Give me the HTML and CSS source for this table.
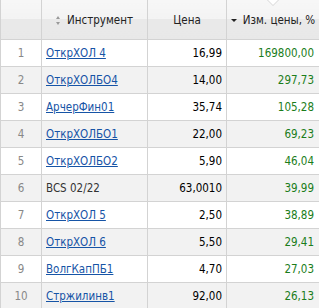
FILE: index.html
```html
<!DOCTYPE html>
<html lang="ru">
<head>
<meta charset="utf-8">
<link rel="stylesheet" href="styles.css">
</head>
<body>
<table class="grid">
  <colgroup>
    <col class="c-num"><col class="c-name"><col class="c-price"><col class="c-chg">
  </colgroup>
  <thead>
    <tr>
      <th></th>
      <th><span class="sort-both"></span>Инструмент</th>
      <th>Цена</th>
      <th class="sorted"><span class="sort-desc"></span>Изм. цены, %</th>
    </tr>
  </thead>
  <tbody>
    <tr><td class="num">1</td><td class="name"><a href="#">ОткрХОЛ 4</a></td><td class="price">16,99</td><td class="chg">169800,00</td></tr>
    <tr><td class="num">2</td><td class="name"><a href="#">ОткрХОЛБО4</a></td><td class="price">14,00</td><td class="chg">297,73</td></tr>
    <tr><td class="num">3</td><td class="name"><a href="#">АрчерФин01</a></td><td class="price">35,74</td><td class="chg">105,28</td></tr>
    <tr><td class="num">4</td><td class="name"><a href="#">ОткрХОЛБО1</a></td><td class="price">22,00</td><td class="chg">69,23</td></tr>
    <tr><td class="num">5</td><td class="name"><a href="#">ОткрХОЛБО2</a></td><td class="price">5,90</td><td class="chg">46,04</td></tr>
    <tr><td class="num">6</td><td class="name"><span class="plain">BCS 02/22</span></td><td class="price">63,0010</td><td class="chg">39,99</td></tr>
    <tr><td class="num">7</td><td class="name"><a href="#">ОткрХОЛ 5</a></td><td class="price">2,50</td><td class="chg">38,89</td></tr>
    <tr><td class="num">8</td><td class="name"><a href="#">ОткрХОЛ 6</a></td><td class="price">5,50</td><td class="chg">29,41</td></tr>
    <tr><td class="num">9</td><td class="name"><a href="#">ВолгКапПБ1</a></td><td class="price">4,70</td><td class="chg">27,03</td></tr>
    <tr><td class="num">10</td><td class="name"><a href="#">Стржилинв1</a></td><td class="price">92,00</td><td class="chg">26,13</td></tr>
  </tbody>
</table>
</body>
</html>
```
FILE: styles.css
```css
html, body {
  margin: 0;
  padding: 0;
  background: #ffffff;
}
body {
  font-family: "DejaVu Sans Condensed", "Liberation Sans", Arial, sans-serif;
  font-size: 11.5px;
  color: #000;
}
.grid {
  border-collapse: collapse;
  table-layout: fixed;
  width: 319px;
}
.c-num { width: 41px; }
.c-name { width: 106px; }
.c-price { width: 79px; }
.c-chg { width: 93px; }

.grid th {
  height: 39px;
  padding: 0;
  font-weight: normal;
  color: #222;
  text-align: center;
  background: linear-gradient(to bottom, #f7f7f7 0, #f3f3f3 50%, #e9e9e9 50%, #e8e8e8 100%);
  border-left: 1px solid #d3d3d3;
  border-right: 1px solid #d3d3d3;
  border-bottom: 1px solid #d3d3d3;
  white-space: nowrap;
  position: relative;
}
.grid td {
  height: 26px;
  padding: 0;
  border: 1px solid #d3d3d3;
  white-space: nowrap;
}
.grid tbody tr:nth-child(even) td {
  background: #f2f2f2;
}
.num {
  text-align: center;
  color: #888;
}
.name {
  padding-left: 4px !important;
}
.name a {
  color: #1654a6;
  text-decoration: underline;
}
.plain {
  color: #333;
}
.price {
  text-align: right;
  padding-right: 4px !important;
}
.chg {
  text-align: right;
  padding-right: 5px !important;
  color: #1b7d1b;
}
.sort-both {
  display: inline-block;
  width: 5px;
  height: 9px;
  margin-right: 6px;
  vertical-align: -1px;
  position: relative;
}
.sort-both::before, .sort-both::after {
  content: "";
  position: absolute;
  left: 0;
  border-left: 2.5px solid transparent;
  border-right: 2.5px solid transparent;
}
.sort-both::before {
  top: 0;
  border-bottom: 3px solid #999;
}
.sort-both::after {
  bottom: 0;
  border-top: 3px solid #999;
}
.sort-desc {
  display: inline-block;
  width: 0;
  height: 0;
  border-left: 3px solid transparent;
  border-right: 3px solid transparent;
  border-top: 3px solid #222;
  margin-right: 6px;
  vertical-align: 2px;
}
.sorted::before {
  content: "";
  position: absolute;
  top: 0;
  left: 50%;
  margin-left: -6px;
  border-left: 6px solid transparent;
  border-right: 6px solid transparent;
  border-top: 6px solid #d6d6d6;
}
.sorted::after {
  content: "";
  position: absolute;
  top: 0;
  left: 50%;
  margin-left: -5px;
  border-left: 5px solid transparent;
  border-right: 5px solid transparent;
  border-top: 5px solid #ffffff;
}
```
